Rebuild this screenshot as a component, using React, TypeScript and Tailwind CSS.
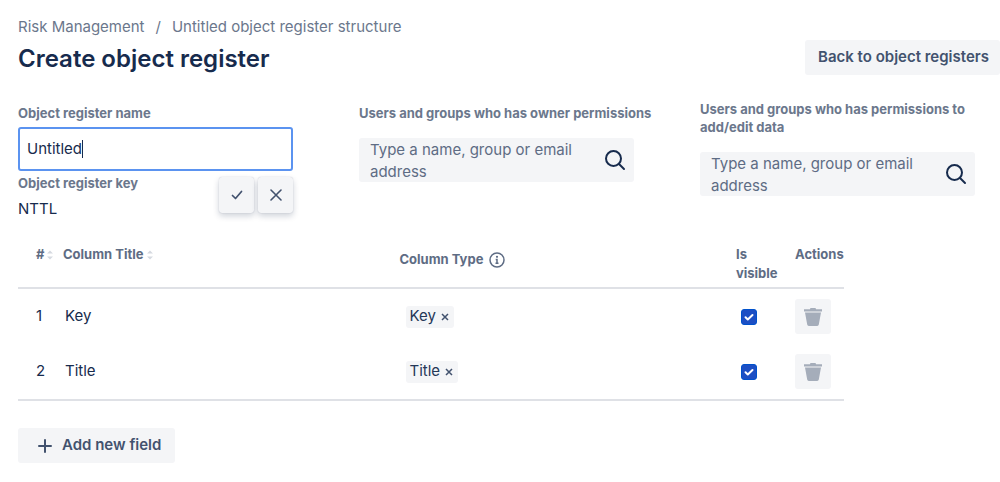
import { useState } from "react";

const INITIAL_ROWS = [
  { id: 1, title: "Key" },
  { id: 2, title: "Title" },
];

const LABEL = "text-[13px] leading-[18px] font-bold text-[#6b778c]";
const FLOATING_BUTTON =
  "flex h-9 w-[35px] items-center justify-center rounded-[3px] bg-[#f4f5f7] shadow-[0_3px_6px_rgba(9,30,66,0.2),0_0_1px_rgba(9,30,66,0.25)]";

function SearchIcon() {
  return (
    <svg width="22" height="22" viewBox="0 0 22 22" fill="none" stroke="#172b4d" strokeWidth="2" strokeLinecap="round" aria-hidden="true">
      <circle cx="9.5" cy="9.5" r="7.5" />
      <path d="M15 15l5 5" />
    </svg>
  );
}

function SortIcon() {
  return (
    <svg width="6" height="10" viewBox="0 0 6 10" fill="#d5d9e0" aria-hidden="true">
      <path d="M0 3.5L3 .5l3 3zM0 6.5h6l-3 3z" />
    </svg>
  );
}

function InfoIcon() {
  return (
    <svg width="16" height="16" viewBox="0 0 16 16" fill="none" aria-hidden="true">
      <circle cx="8" cy="8" r="7" stroke="#5e6c84" strokeWidth="1.5" />
      <circle cx="8" cy="4.8" r="1.1" fill="#5e6c84" />
      <path d="M6.7 7.5H8v3.7M6.5 11.2h3" stroke="#5e6c84" strokeWidth="1.5" />
    </svg>
  );
}

function TrashIcon() {
  return (
    <svg width="18" height="18" viewBox="0 0 18 18" fill="#a5adba" aria-hidden="true">
      <path d="M0 1.2h6C6 .5 6.5 0 7.2 0h3.6c.7 0 1.2.5 1.2 1.2h6v2.3H0zM1 4.6h16l-2.2 12c-.2.9-.7 1.4-1.6 1.4H4.8c-.9 0-1.4-.5-1.6-1.4z" />
    </svg>
  );
}

function PeoplePicker({ id, label }: { id: string; label: string }) {
  return (
    <div>
      <label htmlFor={id} className={`block ${LABEL}`}>
        {label}
      </label>
      <div className="mt-4 flex items-center rounded-[3px] bg-[#f4f5f7] pr-2">
        <textarea
          id={id}
          rows={2}
          placeholder="Type a name, group or email address"
          className="block h-11 min-w-0 flex-1 resize-none overflow-hidden bg-transparent pt-px pl-[11px] text-[15px] leading-[22px] text-[#172b4d] outline-none placeholder:text-[#5e6c84]"
        />
        <button type="button" aria-label="Search" className="shrink-0">
          <SearchIcon />
        </button>
      </div>
    </div>
  );
}

export default function App() {
  const [name, setName] = useState("Untitled");
  const [rows, setRows] = useState(INITIAL_ROWS);

  const addRow = () => setRows((prev) => [...prev, { id: prev.length + 1, title: "New field" }]);
  const removeRow = (id: number) => setRows((prev) => prev.filter((row) => row.id !== id));

  return (
    <main className="bg-white pt-4 pb-5 pl-[18px] font-['Inter','Liberation_Sans',sans-serif] text-[15px] text-[#172b4d]">
      <header className="flex items-end justify-between">
        <div>
          <nav aria-label="Breadcrumb" className="flex gap-[11px] leading-[22px] text-[#6b778c]">
            <a href="#risk">Risk Management</a>
            <span>/</span>
            <a href="#structure">Untitled object register structure</a>
          </nav>
          <h1 className="mt-1 text-2xl leading-[33px] font-semibold">Create object register</h1>
        </div>
        <button type="button" className="h-[35px] rounded-[3px] bg-[#f4f5f7] pr-[11px] pl-[13px] font-semibold text-[#42526e]">
          Back to object registers
        </button>
      </header>

      <form className="mt-[25px] grid grid-cols-3 gap-x-[66px] pr-[25px]" onSubmit={(event) => event.preventDefault()}>
        <div className="pt-1">
          <label htmlFor="register-name" className={`block ${LABEL}`}>
            Object register name
          </label>
          <div className="relative mt-[5px]">
            <div className="flex h-11 items-center rounded-[3px] border-2 border-[#5b93f0] bg-white px-[7px]">
              <input
                id="register-name"
                autoFocus
                value={name}
                onChange={(event) => setName(event.target.value)}
                className="field-sizing-content max-w-full caret-transparent outline-none"
              />
              <span className="h-[18px] w-px shrink-0 bg-[#172b4d]" />
            </div>
            <div className="absolute top-full right-0 mt-1.5 flex gap-1">
              <button type="submit" aria-label="Save name" className={FLOATING_BUTTON}>
                <svg width="12" height="10" viewBox="0 0 12 10" fill="none" stroke="#42526e" strokeWidth="1.7" strokeLinecap="round" strokeLinejoin="round" aria-hidden="true">
                  <path d="M1.5 5.5L4.5 8.5l6-7" />
                </svg>
              </button>
              <button type="button" aria-label="Cancel" className={FLOATING_BUTTON}>
                <svg width="12" height="12" viewBox="0 0 12 12" fill="none" stroke="#42526e" strokeWidth="1.6" strokeLinecap="round" aria-hidden="true">
                  <path d="M1 1l10 10M11 1L1 11" />
                </svg>
              </button>
            </div>
          </div>
          <p className={`mt-[3px] ${LABEL}`}>Object register key</p>
          <p className="mt-1.5 leading-[22px]">NTTL</p>
        </div>
        <div className="pt-1 whitespace-nowrap">
          <PeoplePicker id="owners" label="Users and groups who has owner permissions" />
        </div>
        <PeoplePicker id="editors" label="Users and groups who has permissions to add/edit data" />
      </form>

      <div className="mt-[25px] pr-[156px]">
        <table className="w-full table-fixed border-collapse text-left">
          <colgroup>
            <col className="w-[45px]" />
            <col />
            <col />
            <col className="w-[59px]" />
            <col className="w-[49px]" />
          </colgroup>
          <thead className="align-top text-[13px] leading-[19px] text-[#5e6c84]">
            <tr className="border-b-2 border-[#dfe1e6]">
              <th scope="col" className="pb-1 pl-[18px] font-bold">
                <span className="flex items-center gap-[3px]">
                  # <SortIcon />
                </span>
              </th>
              <th scope="col" className="font-bold">
                <span className="flex items-center gap-[3px]">
                  Column Title <SortIcon />
                </span>
              </th>
              <th scope="col" className="pt-[5px] font-bold">
                <span className="flex items-center gap-1.5">
                  Column Type <InfoIcon />
                </span>
              </th>
              <th scope="col" className="pr-3 pb-1 font-bold">Is visible</th>
              <th scope="col" className="font-bold">Actions</th>
            </tr>
          </thead>
          <tbody className="border-b-2 border-[#dfe1e6]">
            {rows.map((row) => (
              <tr key={row.id} className="h-14">
                <td className="pl-[18px]">{row.id}</td>
                <td className="pl-0.5">{row.title}</td>
                <td className="pl-1.5">
                  <span className="inline-flex h-[22px] items-center gap-[5px] rounded-[3px] bg-[#f4f5f7] pr-[5px] pl-1 text-[#253858]">
                    {row.title}
                    <button type="button" aria-label={`Clear ${row.title}`}>
                      <svg width="8" height="8" viewBox="0 0 8 8" stroke="#42526e" strokeWidth="1.5" aria-hidden="true">
                        <path d="M1 1l6 6M7 1L1 7" />
                      </svg>
                    </button>
                  </span>
                </td>
                <td className="pl-[5px]">
                  <label className="grid w-4">
                    <input
                      type="checkbox"
                      defaultChecked
                      aria-label={`${row.title} is visible`}
                      className="peer col-start-1 row-start-1 h-4 w-4 appearance-none rounded-[3px] border border-[#0052cc] checked:bg-[#1d4fc4]"
                    />
                    <svg className="pointer-events-none invisible col-start-1 row-start-1 peer-checked:visible" width="16" height="16" viewBox="0 0 16 16" fill="none" stroke="white" strokeWidth="2" strokeLinecap="round" strokeLinejoin="round" aria-hidden="true">
                      <path d="M4.5 8.3l2.3 2.2 4.7-4.5" />
                    </svg>
                  </label>
                </td>
                <td>
                  <button
                    type="button"
                    aria-label={`Delete ${row.title}`}
                    onClick={() => removeRow(row.id)}
                    className="flex h-[35px] w-9 items-center justify-center rounded-[3px] bg-[#f4f5f7]"
                  >
                    <TrashIcon />
                  </button>
                </td>
              </tr>
            ))}
          </tbody>
        </table>
      </div>

      <button
        type="button"
        onClick={addRow}
        className="mt-[27px] flex h-[35px] items-center gap-2.5 rounded-[3px] bg-[#f4f5f7] pr-3.5 pl-5 font-semibold text-[#42526e]"
      >
        <svg width="14" height="14" viewBox="0 0 14 14" stroke="#42526e" strokeWidth="2" strokeLinecap="round" aria-hidden="true">
          <path d="M7 1v12M1 7h12" />
        </svg>
        Add new field
      </button>
    </main>
  );
}
